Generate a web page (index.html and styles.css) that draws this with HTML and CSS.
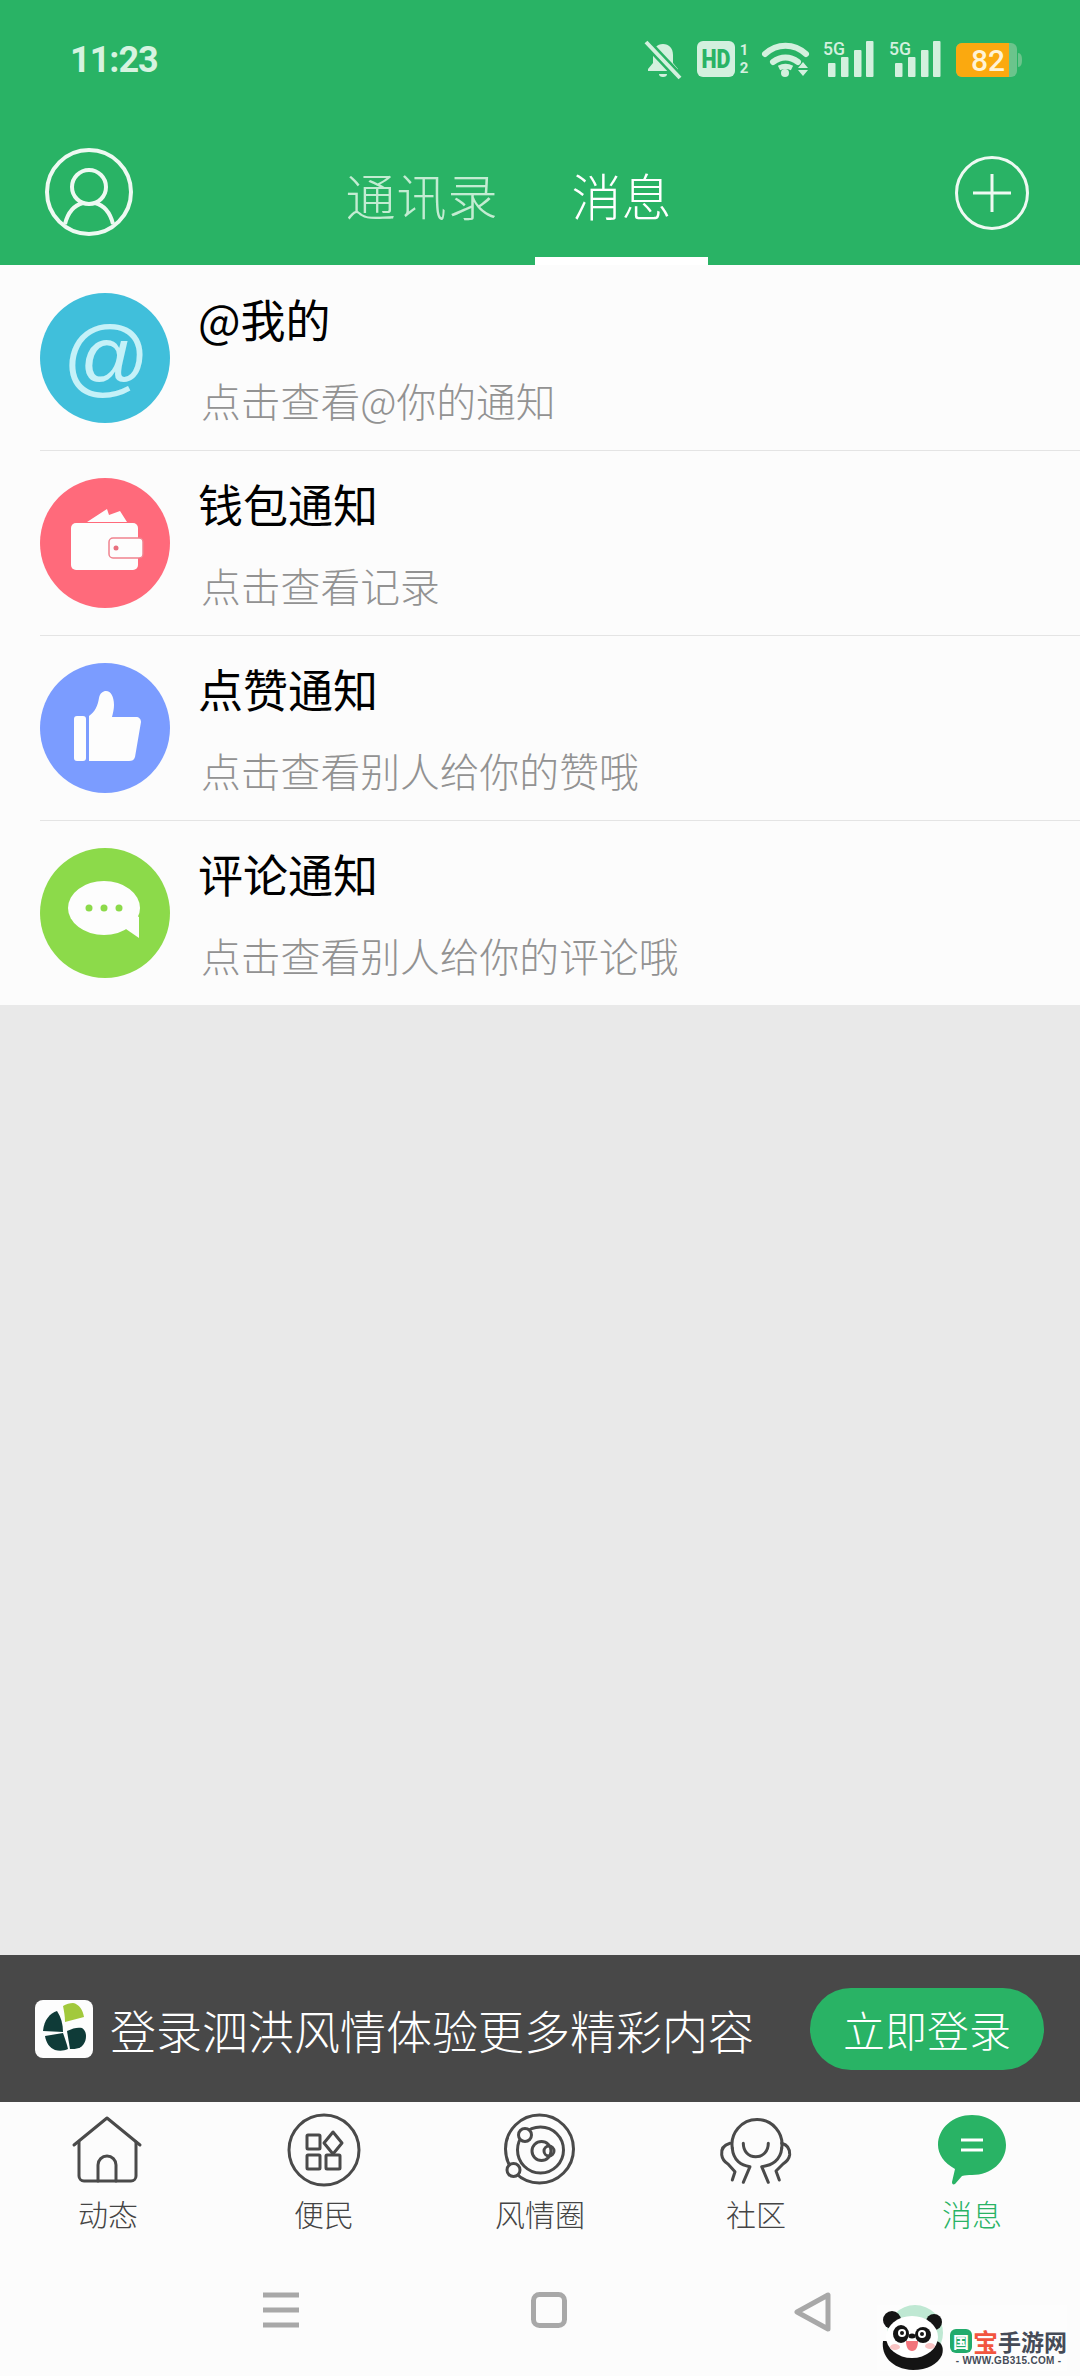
FILE: index.html
```html
<!DOCTYPE html>
<html lang="zh-CN">
<head>
    <meta charset="UTF-8">
    <meta name="viewport" content="width=device-width, initial-scale=1.0">
    <title>消息</title>
    <link rel="stylesheet" href="styles.css">
</head>
<body>
<div class="app">

    <!-- Status bar + top tabs -->
    <header class="top">
        <div class="status">
            <span class="time">11:23</span>
            <div class="status-icons">
                <svg class="s-icon" width="36" height="38" viewBox="0 0 36 38">
                    <path d="M18 3c-6 0-10 4-10 11v8l-5 6v2h30v-2l-5-6v-8C28 7 24 3 18 3z"/>
                    <path d="M14 33h8a4 3 0 0 1-8 0z"/>
                    <path class="s-cut" d="M2 2l32 34"/>
                    <path class="s-slash" d="M1 1l34 36"/>
                </svg>
                <svg class="s-icon" width="50" height="36" viewBox="0 0 50 36">
                    <rect x="1" y="0" width="38" height="36" rx="6"/>
                    <text class="s-hd" x="20" y="27" textLength="29" lengthAdjust="spacingAndGlyphs">HD</text>
                    <text class="s-sim" x="48" y="14">1</text>
                    <text class="s-sim" x="48" y="32">2</text>
                </svg>
                <svg class="s-icon" width="46" height="36" viewBox="0 0 46 36">
                    <path class="s-wifi" d="M4 13c12-11 29-11 41 0"/>
                    <path class="s-wifi" d="M12 21c8-6 17-6 25 0"/>
                    <path class="s-wifi-in" d="M18 27c4-2 9-2 13 0"/>
                    <circle cx="24" cy="32" r="4"/>
                    <path d="M37 27l5-6 5 6zM37 29l5 6 5-6z"/>
                </svg>
                <svg class="s-icon" width="52" height="36" viewBox="0 0 52 36">
                    <text class="s-5g" x="1" y="14" textLength="22" lengthAdjust="spacingAndGlyphs">5G</text>
                    <rect x="6" y="22" width="7.5" height="14" rx="1"/>
                    <rect x="19" y="16" width="7.5" height="20" rx="1"/>
                    <rect x="32" y="9" width="7.5" height="27" rx="1"/>
                    <rect x="44" y="0" width="7.5" height="36" rx="1"/>
                </svg>
                <svg class="s-icon" width="52" height="36" viewBox="0 0 52 36">
                    <text class="s-5g" x="0" y="14" textLength="22" lengthAdjust="spacingAndGlyphs">5G</text>
                    <rect x="6" y="22" width="7.5" height="14" rx="1"/>
                    <rect x="19" y="16" width="7.5" height="20" rx="1"/>
                    <rect x="32" y="9" width="7.5" height="27" rx="1"/>
                    <rect x="44" y="0" width="7.5" height="36" rx="1"/>
                </svg>
                <svg class="s-icon s-battery" width="66" height="34" viewBox="0 0 66 34">
                    <rect class="s-batt" x="0" y="0" width="61" height="34" rx="6"/>
                    <path class="s-nub" d="M62 10c3 0 4 3 4 7s-1 7-4 7z"/>
                    <path class="s-charge" d="M6 0h47v34H6a6 6 0 0 1-6-6V6a6 6 0 0 1 6-6z"/>
                    <text class="s-level" x="32" y="28">82</text>
                </svg>
            </div>
        </div>
        <div class="toolbar">
            <svg class="avatar" width="88" height="88" viewBox="0 0 88 88">
                <circle class="line-white" cx="44" cy="44" r="42"/>
                <ellipse class="line-white" cx="44" cy="39" rx="17" ry="17"/>
                <path class="line-white" d="M20 76c3-12 10-19 18-21M68 76c-3-12-10-19-18-21"/>
            </svg>
            <nav class="tabs">
                <a class="tab tab-wide">通讯录</a>
                <a class="tab active">消息</a>
            </nav>
            <svg class="plus" width="74" height="74" viewBox="0 0 74 74">
                <circle class="line-white thin" cx="37" cy="37" r="35.5"/>
                <path class="line-white thin" d="M18 37h38M37 18v38"/>
            </svg>
        </div>
    </header>

    <!-- Notification list -->
    <main class="content">
        <ul class="notices">
            <li class="notice">
                <svg class="notice-icon" width="130" height="130" viewBox="0 0 130 130">
                    <circle class="bg-blue" cx="65" cy="65" r="65"/>
                    <text class="at-sign" x="65" y="93">@</text>
                </svg>
                <div class="notice-text">
                    <div class="notice-title">@我的</div>
                    <div class="notice-sub">点击查看@你的通知</div>
                </div>
            </li>
            <li class="notice">
                <svg class="notice-icon" width="130" height="130" viewBox="0 0 130 130">
                    <circle class="bg-red" cx="65" cy="65" r="65"/>
                    <path class="fill-white" d="M47 44l20-13 2 6 11-4 7 11z"/>
                    <rect class="fill-white" x="31" y="45" width="67" height="47" rx="5"/>
                    <rect class="wallet-tab" x="69" y="60" width="34" height="20" rx="4"/>
                    <circle class="wallet-dot" cx="76" cy="70" r="2.5"/>
                </svg>
                <div class="notice-text">
                    <div class="notice-title">钱包通知</div>
                    <div class="notice-sub">点击查看记录</div>
                </div>
            </li>
            <li class="notice">
                <svg class="notice-icon" width="130" height="130" viewBox="0 0 130 130">
                    <circle class="bg-periwinkle" cx="65" cy="65" r="65"/>
                    <rect class="fill-white" x="34" y="53" width="12" height="45" rx="3"/>
                    <path class="fill-white" d="M49 98V53c6-4 9-11 10-18 1-5 4-7 7-7 5 0 8 6 8 14 0 4-1 8-2 12h24c3 0 5 2 5 5l-6 35c-1 3-3 4-6 4z"/>
                </svg>
                <div class="notice-text">
                    <div class="notice-title">点赞通知</div>
                    <div class="notice-sub">点击查看别人给你的赞哦</div>
                </div>
            </li>
            <li class="notice">
                <svg class="notice-icon" width="130" height="130" viewBox="0 0 130 130">
                    <circle class="bg-green" cx="65" cy="65" r="65"/>
                    <ellipse class="fill-white" cx="64" cy="60" rx="36" ry="27"/>
                    <path class="fill-white" d="M92 65l7 4v21L83 79z"/>
                    <circle class="bubble-dot" cx="49" cy="60" r="3.5"/>
                    <circle class="bubble-dot" cx="64" cy="60" r="3.5"/>
                    <circle class="bubble-dot" cx="79" cy="60" r="3.5"/>
                </svg>
                <div class="notice-text">
                    <div class="notice-title">评论通知</div>
                    <div class="notice-sub">点击查看别人给你的评论哦</div>
                </div>
            </li>
        </ul>
    </main>

    <!-- Login prompt -->
    <div class="login-bar">
        <svg class="login-logo" width="58" height="58" viewBox="0 0 58 58">
            <rect class="fill-white" width="58" height="58" rx="8"/>
            <path class="logo-lime" d="M28 6c3-2 7-3 10-3 6 1 10 7 11 14l-19 5c0-6-1-11-2-16z"/>
            <path class="logo-dark" d="M22 11c-7 2-13 9-14 20l20 1c0-8-2-15-6-21z"/>
            <path class="logo-dark" d="M10 36l18-3c2 6 4 11 5 16-4 2-9 2-13 1-5-2-9-7-10-14z"/>
            <path class="logo-dark" d="M32 31c6-3 11-4 15-3 3 2 4 5 4 8 0 6-3 10-7 12-3 1-6 1-9 1-1-6-2-12-3-18z"/>
        </svg>
        <span class="login-text">登录泗洪风情体验更多精彩内容</span>
        <button class="login-btn">立即登录</button>
    </div>

    <!-- Bottom tabs -->
    <nav class="bottom-tabs">
        <div class="b-tab">
            <svg width="80" height="80" viewBox="0 0 80 80">
                <path class="line-dark" d="M6 35L39 8l33 27"/>
                <path class="line-dark" d="M11 32v34a5 5 0 0 0 5 5h47a5 5 0 0 0 5-5V32"/>
                <path class="line-dark" d="M30 71V55a9 9 0 0 1 18 0v16"/>
            </svg>
            <span>动态</span>
        </div>
        <div class="b-tab">
            <svg width="80" height="80" viewBox="0 0 80 80">
                <circle class="line-dark" cx="40" cy="40" r="35"/>
                <rect class="line-dark" x="23" y="25" width="13" height="14" rx="1"/>
                <rect class="line-dark" x="23" y="45" width="13" height="14" rx="1"/>
                <rect class="line-dark" x="42" y="45" width="14" height="14" rx="1"/>
                <path class="line-dark" d="M49 22l9 11-9 11-9-11z"/>
            </svg>
            <span>便民</span>
        </div>
        <div class="b-tab">
            <svg width="80" height="80" viewBox="0 0 80 80">
                <circle class="line-dark" cx="39.5" cy="39" r="34"/>
                <circle class="line-dark" cx="40.5" cy="40" r="23"/>
                <circle class="line-dark" cx="41.5" cy="41" r="9.5"/>
                <circle class="line-dark" cx="49" cy="41" r="5"/>
                <circle class="planet" cx="25" cy="25" r="6.5"/>
                <circle class="planet" cx="13.5" cy="60" r="6.5"/>
            </svg>
            <span>风情圈</span>
        </div>
        <div class="b-tab">
            <svg width="80" height="80" viewBox="0 0 80 80">
                <path class="line-dark" d="M16.3 38.3A25 25 0 1 1 65.7 38.3"/>
                <path class="line-dark" d="M16.3 38.3c.5 6 2.5 10 6 13.4 3 2.7 7 4.3 11.7 5L27.3 72.3"/>
                <path class="line-dark" d="M65.7 38.3c-.5 6-3 10-6.700 13.400-3 2.700-8 4.300-13.300 5l6.600 15.600"/>
                <path class="line-dark" d="M27.300 33.300c0 8 5 13.400 12.400 13.400s12.600-5.400 12.600-13.400"/>
                <path class="line-dark" d="M14 33.300C8 35 5 39 5.700 44.700c.6 4.600 3 7.300 6.300 9.300l7 7.700-2.700 8.300"/>
                <path class="line-dark" d="M65.700 33.300c6 1.700 8.300 5.700 8 11.400-.6 4.600-3.700 7.300-6.700 9.300l-7 7 3.300 9"/>
            </svg>
            <span>社区</span>
        </div>
        <div class="b-tab active">
            <svg width="80" height="80" viewBox="0 0 80 80">
                <path class="fill-brand" d="M40 5c19 0 34 13 34 30S59 65 40 65c-4 0-7 0-10 1l-7 8c-2 1-3 0-3-2l3-13C12 53 6 44 6 35 6 18 21 5 40 5z"/>
                <path class="line-bubble" d="M29 30h22M29 40h22"/>
            </svg>
            <span>消息</span>
        </div>
    </nav>

    <!-- System navigation -->
    <div class="sys-nav">
        <svg width="36" height="36" viewBox="0 0 36 36">
            <path class="line-sys-flat" d="M0 3h36M0 18h36M0 33h36"/>
        </svg>
        <svg width="36" height="36" viewBox="0 0 36 36">
            <rect class="line-sys" x="2.500" y="2.500" width="31" height="31" rx="6"/>
        </svg>
        <svg class="sys-back" width="38" height="40" viewBox="0 0 38 40">
            <path class="line-sys" d="M34 3v34L3 20z"/>
        </svg>
    </div>

    <!-- Watermark over the corner -->
    <div class="watermark">
        <svg width="70" height="66" viewBox="0 0 70 66">
            <circle class="pd-mint" cx="38" cy="28" r="28"/>
            <path class="pd-black" d="M6 36c-2 14 8 28 30 29 14 0 25-6 29-15 2-7 0-12-5-14H10z"/>
            <circle class="pd-black" cx="15" cy="15" r="9"/>
            <circle class="pd-black" cx="57" cy="17" r="8"/>
            <ellipse class="pd-white" cx="35" cy="32" rx="26" ry="21"/>
            <ellipse class="pd-black" cx="24" cy="29" rx="8" ry="9"/>
            <ellipse class="pd-black" cx="46" cy="30" rx="8" ry="8"/>
            <circle class="pd-white" cx="25" cy="28" r="4"/>
            <circle class="pd-white" cx="45" cy="29" r="4"/>
            <circle class="pd-black" cx="25" cy="28" r="2"/>
            <circle class="pd-black" cx="45" cy="29" r="2"/>
            <ellipse class="pd-black" cx="35" cy="31" rx="3.500" ry="2.500"/>
            <ellipse class="pd-pink" cx="18" cy="42" rx="5" ry="3"/>
            <ellipse class="pd-pink" cx="53" cy="41" rx="5" ry="3"/>
            <path class="pd-mouth" d="M29 36h12c0 6-2 10-6 10s-6-4-6-10z"/>
        </svg>
        <div class="wm-text">
            <div class="wm-name"><span class="wm-guo">国</span><span class="wm-bao">宝</span><span class="wm-rest">手游网</span></div>
            <div class="wm-url">- WWW.GB315.COM -</div>
        </div>
    </div>

</div>
</body>
</html>
```

FILE: styles.css
```css
* {
    box-sizing: border-box;
}
body {
    margin: 0;
    background-color: #fcfcfc;
    font-family: "Noto Sans CJK SC", "Noto Sans", sans-serif;
}
svg {
    display: block;
    flex-shrink: 0;
}
.app {
    position: relative;
    width: 1080px;
    height: 2376px;
    display: flex;
    flex-direction: column;
    overflow: hidden;
}

/* top */
.top {
    background-color: #29b365;
    height: 265px;
}
.status {
    height: 100px;
    display: flex;
    align-items: flex-start;
    justify-content: space-between;
    padding: 41px 58px 0 70px;
}
.time {
    font-family: Roboto, sans-serif;
    font-weight: 700;
    font-size: 36px;
    line-height: 38px;
    letter-spacing: -1px;
    color: #d6f3e0;
}
.status-icons {
    display: flex;
    align-items: flex-start;
    gap: 15px;
}
.s-icon {
    fill: #d3f0de;
    overflow: visible;
}
.s-battery {
    margin-top: 2px;
}
.s-slash {
    stroke: #d3f0de;
    stroke-width: 4;
    fill: none;
}
.s-cut {
    stroke: #29b365;
    stroke-width: 9;
    fill: none;
}
.s-hd {
    font-family: Roboto, sans-serif;
    font-weight: 900;
    font-size: 25px;
    fill: #29b365;
    text-anchor: middle;
}
.s-sim {
    font-family: Roboto, sans-serif;
    font-size: 15px;
    font-weight: 700;
    text-anchor: middle;
}
.s-wifi {
    fill: none;
    stroke: #d3f0de;
    stroke-width: 6;
    stroke-linecap: round;
}
.s-wifi-in {
    fill: none;
    stroke: #d3f0de;
    stroke-width: 5;
}
.s-5g {
    font-family: Roboto, sans-serif;
    font-weight: 500;
    font-size: 19px;
}
.s-batt {
    fill: #6bc48c;
}
.s-nub {
    fill: #6bc48c;
}
.s-charge {
    fill: #fba90f;
}
.s-level {
    font-family: Roboto, sans-serif;
    font-weight: 500;
    font-size: 30px;
    fill: #fff3d6;
    text-anchor: middle;
}
.toolbar {
    height: 165px;
    display: flex;
    align-items: flex-start;
    padding-left: 45px;
}
.avatar {
    margin-top: 48px;
}
.tabs {
    display: flex;
    height: 100%;
    margin-left: 176px;
}
.tab {
    display: flex;
    align-items: center;
    padding: 31px 36.5px 0;
    border-bottom: 8px solid transparent;
    font-size: 50px;
    font-weight: 300;
    color: #c3ecd2;
}
.tab-wide {
    letter-spacing: 1px;
}
.tab.active {
    color: #fff;
    border-bottom-color: #fff;
}
.plus {
    margin-top: 56px;
    margin-left: auto;
    margin-right: 51px;
}
.line-white {
    fill: none;
    stroke: #eef9f2;
    stroke-width: 4;
}
.line-white.thin {
    stroke-width: 3;
}

/* list */
.content {
    flex: 1;
    background-color: #e9e9e9;
}
.notices {
    list-style: none;
    margin: 0;
    padding: 0;
    background-color: #fcfcfc;
}
.notice {
    position: relative;
    height: 185px;
    display: flex;
    align-items: center;
    padding: 0 0 0 40px;
}
.notice + .notice::before {
    content: "";
    position: absolute;
    left: 40px;
    right: 0;
    top: 0;
    height: 1px;
    background-color: #e4e4e4;
}
.notice-icon {
    margin-right: 28px;
}
.notice-text {
    display: flex;
    flex-direction: column;
}
.notice-title {
    font-size: 45px;
    line-height: 60px;
    color: #000;
}
.notice-sub {
    margin-top: 24px;
    margin-left: 3px;
    font-size: 39.8px;
    line-height: 54px;
    font-weight: 300;
    color: #929292;
}
.bg-blue {
    fill: #40bfdb;
}
.bg-red {
    fill: #ff6a7b;
}
.bg-periwinkle {
    fill: #7b9cff;
}
.bg-green {
    fill: #8cda4a;
}
.fill-white {
    fill: #fdfdfd;
}
.at-sign {
    font-family: "Liberation Sans", sans-serif;
    font-style: italic;
    font-size: 86px;
    fill: #c5f1f8;
    text-anchor: middle;
}
.wallet-tab {
    fill: #fdfdfd;
    stroke: #f0838f;
    stroke-width: 1.5;
}
.wallet-dot {
    fill: #e8707f;
}
.bubble-dot {
    fill: #8cda4a;
}

/* login bar */
.login-bar {
    height: 147px;
    background-color: #484848;
    display: flex;
    align-items: center;
    padding: 0 36px 0 35px;
}
.login-logo {
    margin-right: 17px;
}
.login-text {
    font-size: 46px;
    font-weight: 300;
    color: #fff;
    white-space: nowrap;
}
.login-btn {
    margin-left: auto;
    width: 234px;
    height: 82px;
    border: none;
    border-radius: 41px;
    background-color: #29b365;
    color: #fff;
    font-family: inherit;
    font-size: 42px;
    font-weight: 300;
    padding: 0;
}
.logo-lime {
    fill: #a2c93c;
}
.logo-dark {
    fill: #0f3b38;
}

/* bottom tabs */
.bottom-tabs {
    height: 159px;
    display: grid;
    grid-template-columns: repeat(5, 216px);
    background-color: #fcfcfc;
    padding-top: 8px;
}
.b-tab {
    display: flex;
    flex-direction: column;
    align-items: center;
    font-size: 30px;
    line-height: 40px;
    font-weight: 300;
    color: #444;
}
.b-tab span {
    margin-top: 3px;
}
.b-tab.active {
    color: #29b365;
}
.line-dark {
    fill: none;
    stroke: #4a4a4a;
    stroke-width: 3;
    stroke-linejoin: round;
    stroke-linecap: round;
}
.planet {
    fill: #fcfcfc;
    stroke: #4a4a4a;
    stroke-width: 3;
}
.fill-brand {
    fill: #29b365;
}
.line-bubble {
    fill: none;
    stroke: #fff;
    stroke-width: 3;
}

/* system nav */
.sys-nav {
    height: 115px;
    display: flex;
    align-items: flex-start;
    padding: 31px 0 0 263px;
    gap: 232px;
    background-color: #fcfcfc;
}
.sys-back {
    margin-left: -5px;
}
.line-sys {
    fill: none;
    stroke: #a8a8a8;
    stroke-width: 5;
    stroke-linejoin: round;
}
.line-sys-flat {
    fill: none;
    stroke: #a8a8a8;
    stroke-width: 5;
}

/* watermark */
.watermark {
    position: absolute;
    left: 877px;
    bottom: 5px;
    display: flex;
    align-items: flex-end;
    gap: 3px;
    background-color: #fdfdfd;
}
.wm-text {
    display: flex;
    flex-direction: column;
    align-items: center;
    padding-bottom: 4px;
}
.wm-name {
    display: flex;
    align-items: center;
    font-weight: 700;
}
.wm-guo {
    width: 22px;
    height: 24px;
    border-radius: 6px;
    background-color: #22ab6c;
    color: #fff;
    font-size: 16px;
    line-height: 24px;
    text-align: center;
}
.wm-bao {
    margin-left: 1px;
    font-size: 25px;
    line-height: 28px;
    color: #f2553f;
}
.wm-rest {
    font-size: 23px;
    line-height: 28px;
    color: #454b57;
}
.wm-url {
    font-family: "Liberation Sans", sans-serif;
    font-size: 10px;
    line-height: 12px;
    font-weight: 700;
    color: #454b57;
    letter-spacing: 0.3px;
}
.pd-mint {
    fill: #bfe8d3;
}
.pd-black {
    fill: #141414;
}
.pd-white {
    fill: #fff;
}
.pd-pink {
    fill: #f9c4c4;
}
.pd-mouth {
    fill: #f2747c;
}
```
